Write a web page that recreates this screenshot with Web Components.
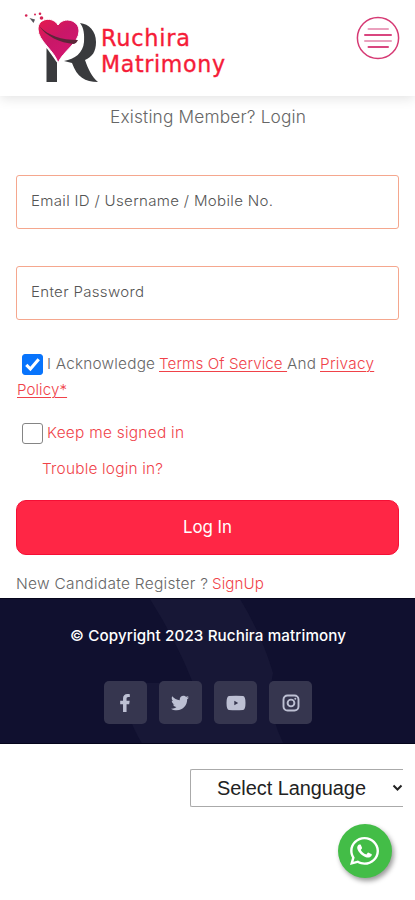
<!DOCTYPE html>
<html lang="en">
<head>
<meta charset="utf-8">
<title>Ruchira Matrimony</title>
<style>
html,body{margin:0;background:#fff}
body{width:415px;height:900px;overflow:hidden;font-family:Inter,"Open Sans",sans-serif;font-weight:300;color:#666}
</style>
</head>
<body>
<login-page></login-page>
<script>
const define=(name,html,after)=>customElements.define(name,class extends HTMLElement{
  connectedCallback(){
    if(this.shadowRoot)return;
    const t=document.createElement('template');t.innerHTML=html;
    this.attachShadow({mode:'open'}).append(t.content.cloneNode(true));
    if(after)after(this);
  }
});

/* A line of text set to the advance width given by "w": half by glyph width, half by tracking. */
define('fit-text',`<style>:host{display:inline-block;white-space:pre;flex:none}span{display:inline-block;text-decoration:inherit;transform-origin:0 50%}</style><span><slot></slot></span>`,el=>{
  const w=+el.getAttribute('w'),s=el.shadowRoot.querySelector('span');
  const n=el.textContent.length,natural=s.getBoundingClientRect().width;
  const scale=Math.sqrt(w/natural);
  s.style.letterSpacing=((w/scale-natural)/(n-1))+'px';
  s.style.transform='scaleX('+scale+')';
  el.style.width=w+'px';
});

define('brand-logo',`<style>
:host{display:flex;color:#f51c38;font:400 23.5px/26px "DejaVu Sans Condensed","DejaVu Sans",sans-serif;-webkit-text-stroke:.35px #f51c38}
svg{display:block;flex:none;width:77px;height:84px}
.name{display:flex;flex-direction:column;padding-top:25px}
</style>
<svg viewBox="1 0 77 84"><defs><linearGradient id="g" x1="0" y1="0" x2=".7" y2="1"><stop offset="0" stop-color="#e61a4c"/><stop offset=".5" stop-color="#c91768"/><stop offset="1" stop-color="#d51672"/></linearGradient></defs>
<path fill="#393a3d" d="M23.500 48C26 51 30 57 34 62.500V82H23.500Z"/>
<path fill="#393a3d" d="M57 23C66 24 73 31 73 42C73 52 69 57 62 60C65 69 69 77 75 82C62 82 54 77 49 63L41 61C52 59 60 53 61 42C61.500 35 61 28 57 23Z"/>
<path fill="url(#g)" stroke="#fff" stroke-width="1" d="M35 63C32 51 15 41 15 29C15 18 30 16 35 25C41 16 56 20 56 31C56 43 40 51 35 63Z"/>
<path fill="#5c2639" d="M16 26C26 36 38 40 55 40C54 42 53 43 51 44C37 43 23 36 16 26Z"/>
<g fill="#d52354"><circle cx="3.200" cy="15.500" r="1.300"/><circle cx="12" cy="14.500" r="1"/><circle cx="17" cy="13.700" r="1.300"/><circle cx="18.500" cy="18" r="1.800"/></g><path fill="#55555b" d="M6.500 18L12 19.500L10.500 23Z"/></svg>
<div class="name"><fit-text w="89">Ruchira</fit-text><fit-text w="124">Matrimony</fit-text></div>`);

define('menu-button',`<style>:host{display:block;width:44px;height:44px}svg{display:block}</style>
<svg width="44" height="44" viewBox="0 0 44 44" fill="none"><circle cx="22" cy="22" r="20.600" stroke="#d63a74" stroke-width="1.500"/><g stroke-linecap="round" stroke-width="2"><path d="M12.500 13H32" stroke="#eaa0bd"/><path d="M9 19H35" stroke="#d9467f"/><path d="M9 25H35" stroke="#eaa0bd"/><path d="M12.500 31H32" stroke="#d9467f"/></g></svg>`);

define('site-header',`<style>
:host{display:flex;justify-content:space-between;box-sizing:border-box;height:96px;padding:0 15px 0 24px;background:#fff;box-shadow:0 2px 12px rgba(0,0,0,.12);position:relative}
menu-button{margin-top:16px}
</style><brand-logo></brand-logo><menu-button></menu-button>`);

define('text-field',`<style>
:host{display:flex;align-items:center;box-sizing:border-box;height:54px;padding:0 14px 3px;border:1.5px solid #f5a78e;border-radius:3px;font-size:14.500px;color:#555}
</style><slot></slot>`);

define('check-box',`<style>
:host{display:flex;flex:none;box-sizing:border-box;width:21px;height:21px;border:1.500px solid #858585;border-radius:3px;background:#fff}
:host([checked]){background:#0874fc;border-color:#0874fc}svg{display:none}:host([checked]) svg{display:block}
</style><svg width="19" height="19" viewBox="0 0 19 19"><path d="M3.300 9.800L7.400 14L15.700 4.200" fill="none" stroke="#fff" stroke-width="3.100"/></svg>`);

define('text-link',`<style>:host{display:inline-block;color:#f04249}:host([underlined]) ::slotted(fit-text){text-decoration:underline 1px;text-underline-offset:2px}</style><slot></slot>`);

define('main-button',`<style>:host{display:flex;align-items:center;justify-content:center;box-sizing:border-box;height:55px;border:1px solid #f50f35;border-radius:10px;background:#ff2645;color:#fff;font-size:17px;font-weight:400;padding-bottom:1px}</style><slot></slot>`);

define('login-form',`<style>
:host{display:block;box-sizing:border-box;height:502px;padding:7px 16px 0;font-size:15px}
.title{display:flex;justify-content:center;height:28px;line-height:28px;font-size:17px;margin-bottom:44px}
text-field{margin-bottom:37px}
.row{display:flex;align-items:center;height:26px;line-height:26px}
check-box{margin:0 4px 0 6px}
.agree{margin-top:-6px}.policy{padding-left:1px}
.keep{margin-top:17px}.trouble{margin-top:10px;padding-left:26px}
main-button{margin-top:18px}
.new{margin-top:16px}
.gap{width:4px}
</style>
<div class="title"><fit-text w="196">Existing Member? Login</fit-text></div>
<text-field><fit-text w="242">Email ID / Username / Mobile No.</fit-text></text-field>
<text-field><fit-text w="113">Enter Password</fit-text></text-field>
<div class="row agree"><check-box checked></check-box><fit-text w="108">I Acknowledge</fit-text><i class="gap"></i><text-link underlined><fit-text w="128">Terms Of Service </fit-text></text-link><fit-text w="29">And</fit-text><i class="gap"></i><text-link underlined><fit-text w="54">Privacy</fit-text></text-link></div>
<div class="row policy"><text-link underlined><fit-text w="50">Policy*</fit-text></text-link></div>
<div class="row keep"><check-box></check-box><text-link><fit-text w="137">Keep me signed in</fit-text></text-link></div>
<div class="row trouble"><text-link><fit-text w="121">Trouble login in?</fit-text></text-link></div>
<main-button><fit-text w="49">Log In</fit-text></main-button>
<div class="row new"><fit-text w="192">New Candidate Register ?</fit-text><i class="gap"></i><text-link><fit-text w="52">SignUp</fit-text></text-link></div>`);

define('social-tile',`<style>:host{display:flex;align-items:center;justify-content:center;width:43px;height:43px;border-radius:5px;background:#36364f;color:#bdc0d3}::slotted(svg){display:block;fill:currentColor}</style><slot></slot>`);

define('site-footer',`<style>
:host{display:grid;box-sizing:border-box;height:146px;overflow:hidden;border-top:1px solid #05051b;border-bottom:1px solid #05051b;background:#10102f;color:#fff;font-size:15px;font-weight:500;line-height:28px}
.band,.content{grid-area:1/1}
.content{display:flex;flex-direction:column;align-items:center;padding-top:23px}
.social{display:flex;gap:12.300px;margin:31px 0 0 1px}
</style>
<svg class="band" width="415" height="146" viewBox="0 0 415 146"><path fill="#171736" d="M150 0H240Q261 34 273 74Q265 108 284 146H143Q122 113 127 84H193Q176 41 150 0Z"/></svg>
<div class="content"><fit-text w="276">© Copyright 2023 Ruchira matrimony</fit-text>
<div class="social">
<social-tile><svg width="12" height="18" viewBox="0 0 320 512"><path d="M279 288l14-93h-89v-60c0-25 12-50 52-50h41V7s-37-7-72-7c-73 0-121 44-121 125v70H23v93h81v224h100V288z"/></svg></social-tile>
<social-tile><svg width="18" height="18" viewBox="0 0 512 512"><path d="M459 152c0 5 0 9 0 14 0 138-105 298-298 298-59 0-114-17-161-47 8 1 16 1 25 1 49 0 94-16 130-45-46-1-84-31-98-73 7 1 13 2 20 2 9 0 19-1 28-4-48-10-84-52-84-103v-1c14 8 30 13 47 13-28-19-47-51-47-87 0-19 5-37 14-53 52 64 129 105 216 110-2-8-3-16-3-24 0-58 47-105 105-105 30 0 58 13 77 33 24-5 46-13 66-26-8 25-24 45-46 58 21-2 42-8 60-16-14 21-32 39-52 54z"/></svg></social-tile>
<social-tile><svg width="20" height="16" viewBox="0 0 20 16"><path fill-rule="evenodd" d="M3 1Q10 .3 17 1Q19.500 1.300 19.500 8Q19.500 14.500 17 15Q10 15.700 3 15Q.5 14.700 .5 8Q.5 1.300 3 1ZM8.300 5.700V10.300L12.200 8Z"/></svg></social-tile>
<social-tile><svg width="18" height="18" viewBox="0 0 18 18"><g fill="none" stroke="#bdc0d3" stroke-width="1.900"><rect x="1.500" y="1.500" width="15" height="15" rx="4"/><circle cx="9" cy="9" r="3.400"/></g><circle cx="13.300" cy="4.800" r="1"/></svg></social-tile>
</div></div>`);

define('language-select',`<style>
:host{display:flex;align-items:center;box-sizing:border-box;width:213px;height:38px;margin:25px 0 0 190px;padding-left:26px;border:1px solid #aaa;border-right:0;border-radius:2px 0 0 2px;color:#222;font:400 20px/36px "Liberation Sans",sans-serif}
svg{margin-left:26px}
</style><slot></slot><svg width="11" height="8" viewBox="0 0 11 8"><path d="M1.500 1.500L5.500 5.500L9.500 1.500" fill="none" stroke="#222" stroke-width="2"/></svg>`);

define('chat-button',`<style>:host{display:flex;align-items:center;justify-content:center;width:54px;height:54px;margin:17px 0 0 337.500px;border-radius:50%;background:#43bd47;box-shadow:2px 3px 5px rgba(0,0,0,.4)}</style>
<svg width="29" height="30" viewBox="0 0 448 512" preserveAspectRatio="none"><path fill="#fff" transform="translate(0 -18) scale(1 1.070)" d="M380.900 97.100C339 55.100 283.200 32 223.900 32c-122.400 0-222 99.600-222 222 0 39.100 10.200 77.300 29.600 111L0 480l117.700-30.900c32.400 17.700 68.900 27 106.100 27h.1c122.300 0 224.100-99.600 224.100-222 0-59.300-25.200-115-67.100-157zM223.900 438.700c-33.200 0-65.700-8.900-94-25.700l-6.700-4-69.800 18.300L72 359.200l-4.400-7c-18.500-29.400-28.200-63.300-28.200-98.200 0-101.700 82.800-184.500 184.600-184.500 49.300 0 95.600 19.200 130.400 54.100s56.200 81.200 56.100 130.500c0 101.800-84.900 184.600-186.600 184.600zM325.100 300.500c-5.500-2.800-32.800-16.200-37.900-18-5.100-1.900-8.800-2.800-12.500 2.800s-14.300 18-17.600 21.800c-3.200 3.700-6.500 4.200-12 1.400-32.600-16.300-54-29.100-75.500-66-5.700-9.800 5.700-9.100 16.300-30.300 1.800-3.700.9-6.900-.5-9.700s-12.500-30.100-17.100-41.200c-4.500-10.800-9.100-9.300-12.500-9.500-3.200-.2-6.900-.2-10.600-.2s-9.700 1.400-14.800 6.900c-5.100 5.600-19.400 19-19.400 46.300s19.900 53.700 22.600 57.400c2.800 3.700 39.100 59.700 94.800 83.800 35.200 15.200 49 16.500 66.600 13.900 10.700-1.600 32.800-13.400 37.400-26.400s4.600-24.100 3.200-26.400c-1.300-2.500-5-3.900-10.500-6.600z"/></svg>`);

define('login-page',`<style>:host{display:block;width:415px;height:900px;background:#fff}</style>
<site-header></site-header><login-form></login-form><site-footer></site-footer>
<language-select><fit-text w="149">Select Language</fit-text></language-select><chat-button></chat-button>`);
</script>
</body>
</html>
